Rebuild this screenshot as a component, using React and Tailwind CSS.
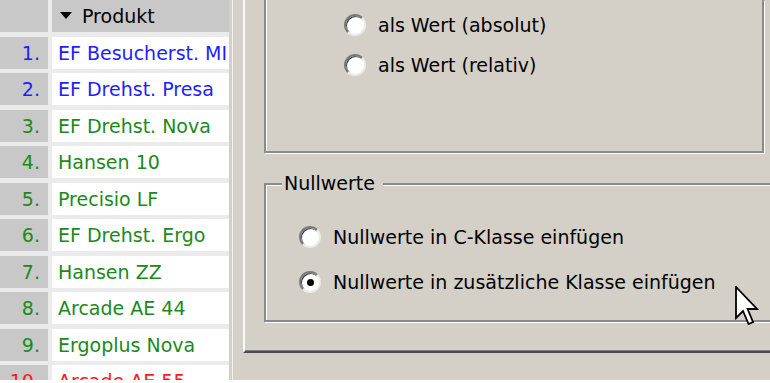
import React from 'react';

// Classic Windows-style dialog: ranking list on the left, option groups on the right.

const ROWS = [
  { n: 1, name: 'EF Besucherst. MI', color: 'text-[#1e1eff]' },
  { n: 2, name: 'EF Drehst. Presa', color: 'text-[#1e1eff]' },
  { n: 3, name: 'EF Drehst. Nova', color: 'text-[#1a8a1a]' },
  { n: 4, name: 'Hansen 10', color: 'text-[#1a8a1a]' },
  { n: 5, name: 'Precisio LF', color: 'text-[#1a8a1a]' },
  { n: 6, name: 'EF Drehst. Ergo', color: 'text-[#1a8a1a]' },
  { n: 7, name: 'Hansen ZZ', color: 'text-[#1a8a1a]' },
  { n: 8, name: 'Arcade AE 44', color: 'text-[#1a8a1a]' },
  { n: 9, name: 'Ergoplus Nova', color: 'text-[#1a8a1a]' },
  { n: 10, name: 'Arcade AE 55', color: 'text-[#ff1a1a]' },
];

function Radio({ checked, label }) {
  return (
    <div className="flex items-center h-[22px]">
      <div className="w-[22px] h-[22px] shrink-0 rounded-full bg-white border-2 border-t-[#7a7a7a] border-l-[#7a7a7a] border-r-[#ecebe8] border-b-[#ecebe8] shadow-[inset_1px_1px_0_#404040] flex items-center justify-center">
        {checked && <div className="w-[7px] h-[7px] rounded-full bg-black" />}
      </div>
      <span className="ml-[12px] whitespace-nowrap">{label}</span>
    </div>
  );
}

export default function App() {
  return (
    <div
      className="relative w-[770px] h-[383px] overflow-hidden bg-white text-[19px] leading-[22px] text-black"
      style={{ fontFamily: '"DejaVu Sans", Verdana, sans-serif' }}
    >
      <div className="flex h-[380px]">
        {/* ranking list */}
        <div className="w-[229px] shrink-0 bg-[#ebebeb] grid grid-cols-[48px_177px] gap-x-[4px] gap-y-[4.5px] auto-rows-[32px] content-start overflow-hidden">
          <div className="bg-[#c8c8c8]" />
          <div className="bg-[#c8c8c8] flex items-center pl-[8px]">
            <svg width="12" height="8" viewBox="0 0 12 8" className="mr-[10px]">
              <polygon points="0,0 12,0 6,7" fill="#000" />
            </svg>
            <span>Produkt</span>
          </div>
          {ROWS.map((r) => (
            <React.Fragment key={r.n}>
              <div className={`bg-[#c8c8c8] flex items-center justify-end pr-[8px] ${r.color}`}>{r.n}.</div>
              <div className={`bg-white flex items-center pl-[6px] whitespace-nowrap overflow-hidden ${r.color}`}>{r.name}</div>
            </React.Fragment>
          ))}
        </div>

        {/* splitter */}
        <div className="w-[14px] shrink-0 bg-[#d4d0c8] flex">
          <div className="w-[3px]" />
          <div className="w-[1px] bg-[#f2f1ee]" />
        </div>

        {/* options panel */}
        <div className="flex-1 flex flex-col bg-[#d4d0c8] overflow-hidden">
          <div className="h-[353px] shrink-0 border-l-2 border-l-[#fbfbfb] border-b-2 border-b-[#4a4a4a] shadow-[inset_0_-1px_0_#808080] pl-[19px]">
            <div className="w-[500px] h-[153px] border-2 border-t-0 border-[#8a8a8a] shadow-[inset_1px_0_0_#fff,1px_1px_0_#fff] pl-[78px] pt-[14px] flex flex-col gap-[18px]">
              <Radio label="als Wert (absolut)" />
              <Radio label="als Wert (relativ)" />
            </div>

            <div className="relative mt-[30px] w-[560px] h-[139px] border-2 border-[#8a8a8a] shadow-[inset_1px_1px_0_#fff,1px_1px_0_#fff] pl-[33px] pt-[41px] flex flex-col gap-[23px]">
              <span className="absolute left-[16px] top-[-13px] bg-[#d4d0c8] pl-[2px] pr-[8px]">Nullwerte</span>
              <Radio label="Nullwerte in C-Klasse einfügen" />
              <Radio checked label="Nullwerte in zusätzliche Klasse einfügen" />
            </div>
          </div>
        </div>
      </div>

      {/* mouse pointer */}
      <svg
        className="absolute left-[735px] top-[286px]"
        width="24"
        height="40"
        viewBox="0 0 12 20"
      >
        <polygon
          points="0.5,0.5 0.5,16 4,12.5 6.8,19 9,18 6.3,11.5 11,11.5"
          fill="#fff"
          stroke="#000"
          strokeWidth="0.9"
          strokeLinejoin="miter"
        />
      </svg>
    </div>
  );
}
